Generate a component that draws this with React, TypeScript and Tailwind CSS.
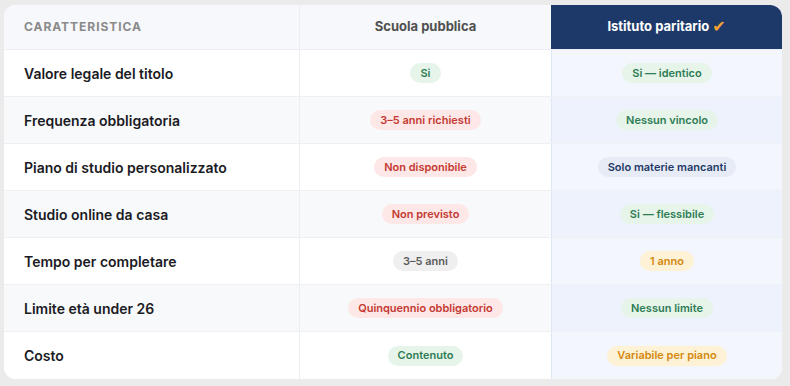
import React from 'react';

type Tone = 'green' | 'red' | 'gray' | 'blue' | 'amber';

type Row = {
  label: string;
  pub: [string, Tone];
  par: [string, Tone];
};

const rows: Row[] = [
  { label: 'Valore legale del titolo', pub: ['Si', 'green'], par: ['Si — identico', 'green'] },
  { label: 'Frequenza obbligatoria', pub: ['3–5 anni richiesti', 'red'], par: ['Nessun vincolo', 'green'] },
  { label: 'Piano di studio personalizzato', pub: ['Non disponibile', 'red'], par: ['Solo materie mancanti', 'blue'] },
  { label: 'Studio online da casa', pub: ['Non previsto', 'red'], par: ['Si — flessibile', 'green'] },
  { label: 'Tempo per completare', pub: ['3–5 anni', 'gray'], par: ['1 anno', 'amber'] },
  { label: 'Limite età under 26', pub: ['Quinquennio obbligatorio', 'red'], par: ['Nessun limite', 'green'] },
  { label: 'Costo', pub: ['Contenuto', 'green'], par: ['Variabile per piano', 'amber'] },
];

const toneClass = (tone: Tone) => {
  switch (tone) {
    case 'green': return 'bg-[#e6f4ea] text-[#2f7d55]';
    case 'red': return 'bg-[#fde7e7] text-[#c43a32]';
    case 'gray': return 'bg-[#efefef] text-[#5b5b5b]';
    case 'blue': return 'bg-[#e7ebf5] text-[#1f3a68]';
    default: return 'bg-[#fdf1d6] text-[#d4880c]';
  }
};

const Pill: React.FC<{ text: string; tone: Tone }> = ({ text, tone }) => (
  <span className={`inline-flex h-5 items-center rounded-full px-2.5 text-[11px] font-semibold leading-none ${toneClass(tone)}`}>
    {text}
  </span>
);

const App: React.FC = () => {
  return (
    <div className="min-h-[386px] w-[790px] bg-[#ebebeb] pl-1 pt-[5px] font-['Inter','Liberation_Sans',sans-serif]">
      <div className="w-[778px] overflow-hidden rounded-xl bg-white">
        <div className="grid h-[45px] grid-cols-[295px_252px_1fr] border-b border-[#eceef3] bg-[#f7f8fb]">
          <div className="flex items-center pl-5 text-[12px] font-bold tracking-[0.08em] text-[#8a8a8a]">
            CARATTERISTICA
          </div>
          <div className="flex items-center justify-center border-l border-[#eceef3] text-[13px] font-bold text-[#505050]">
            Scuola pubblica
          </div>
          <div className="flex items-center justify-center bg-[#1c396a] text-[13px] font-bold text-white">
            Istituto paritario
            <span className="ml-[3px] font-['DejaVu_Sans',sans-serif] text-[16px] leading-none text-[#f5a133]">✔</span>
          </div>
        </div>
        {rows.map((row, i) => (
          <div
            key={row.label}
            className={`grid h-[47px] grid-cols-[295px_252px_1fr] ${i < rows.length - 1 ? 'border-b border-[#eef0f4]' : ''} ${i % 2 === 1 ? 'bg-[#f8f9fb]' : 'bg-white'}`}
          >
            <div className="flex items-center pl-5 text-[14px] font-semibold text-[#1b1b24]">
              {row.label}
            </div>
            <div className="flex items-center justify-center border-l border-[#eceef3]">
              <Pill text={row.pub[0]} tone={row.pub[1]} />
            </div>
            <div className={`flex items-center justify-center border-l border-[#dfe6f6] ${i % 2 === 1 ? 'bg-[#eef2fc]' : 'bg-[#f3f6fd]'}`}>
              <Pill text={row.par[0]} tone={row.par[1]} />
            </div>
          </div>
        ))}
      </div>
    </div>
  );
};

export default App;
